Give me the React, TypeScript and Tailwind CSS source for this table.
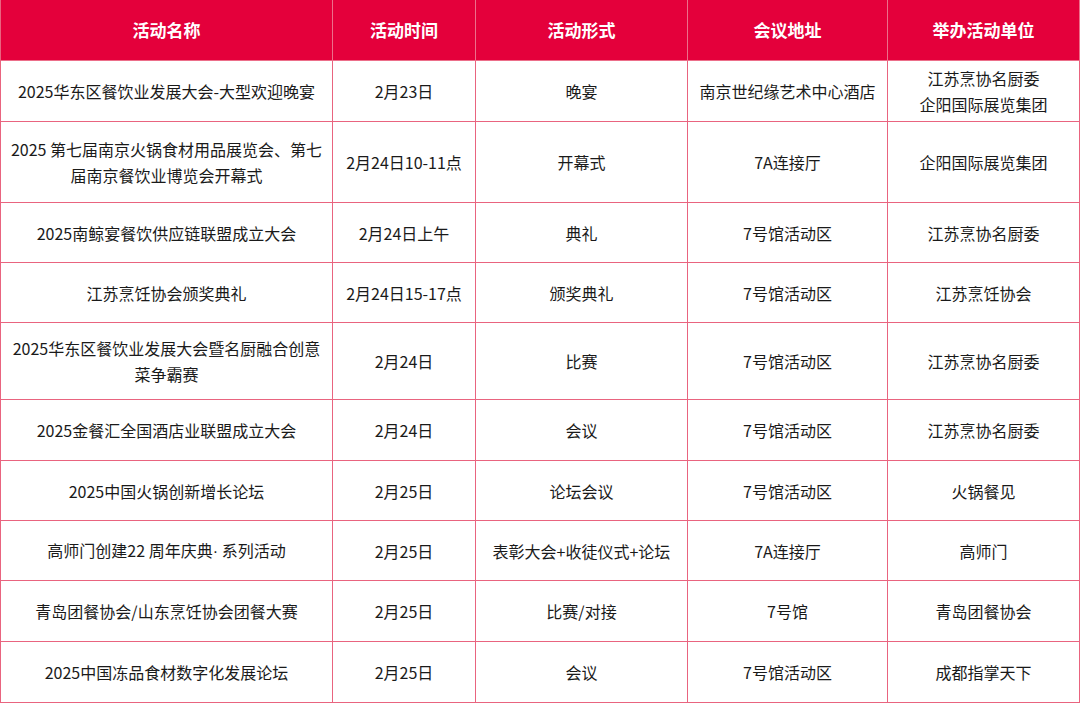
import React from "react";

type Row = { h: string; cells: React.ReactNode[] };

const rows: Row[] = [
  {
    h: "h-[61px]",
    cells: [
      "2025华东区餐饮业发展大会-大型欢迎晚宴",
      "2月23日",
      "晚宴",
      "南京世纪缘艺术中心酒店",
      <>
        江苏烹协名厨委
        <br />
        企阳国际展览集团
      </>,
    ],
  },
  {
    h: "h-[81px]",
    cells: [
      <>
        2025 第七届南京火锅食材用品展览会、第七
        <br />
        届南京餐饮业博览会开幕式
      </>,
      "2月24日10-11点",
      "开幕式",
      "7A连接厅",
      "企阳国际展览集团",
    ],
  },
  {
    h: "h-[60px]",
    cells: ["2025南鲸宴餐饮供应链联盟成立大会", "2月24日上午", "典礼", "7号馆活动区", "江苏烹协名厨委"],
  },
  {
    h: "h-[60px]",
    cells: ["江苏烹饪协会颁奖典礼", "2月24日15-17点", "颁奖典礼", "7号馆活动区", "江苏烹饪协会"],
  },
  {
    h: "h-[77px]",
    cells: [
      <>
        2025华东区餐饮业发展大会暨名厨融合创意
        <br />
        菜争霸赛
      </>,
      "2月24日",
      "比赛",
      "7号馆活动区",
      "江苏烹协名厨委",
    ],
  },
  {
    h: "h-[61px]",
    cells: ["2025金餐汇全国酒店业联盟成立大会", "2月24日", "会议", "7号馆活动区", "江苏烹协名厨委"],
  },
  {
    h: "h-[60px]",
    cells: ["2025中国火锅创新增长论坛", "2月25日", "论坛会议", "7号馆活动区", "火锅餐见"],
  },
  {
    h: "h-[60px]",
    cells: [
      <>
        高师门创建22 周年庆典<span className="font-['Liberation_Sans']">·</span> 系列活动
      </>,
      "2月25日",
      "表彰大会+收徒仪式+论坛",
      "7A连接厅",
      "高师门",
    ],
  },
  {
    h: "h-[61px]",
    cells: ["青岛团餐协会/山东烹饪协会团餐大赛", "2月25日", "比赛/对接", "7号馆", "青岛团餐协会"],
  },
  {
    h: "h-[61px]",
    cells: ["2025中国冻品食材数字化发展论坛", "2月25日", "会议", "7号馆活动区", "成都指掌天下"],
  },
];

const headers = ["活动名称", "活动时间", "活动形式", "会议地址", "举办活动单位"];

export default function App() {
  return (
    <div
      className="w-[1080px] h-[703px] bg-white overflow-hidden"
      style={{ fontFamily: '"Noto Sans CJK SC", "Noto Sans", sans-serif' }}
    >
      <div className="grid grid-cols-[332px_143px_212px_200px_192px] border-l border-[#e9647f]">
        {headers.map((t, i) => (
          <div
            key={"h" + i}
            className="h-[61px] bg-[#e4003b] border-r border-b border-[#ec6f8a] flex items-center justify-center text-white text-[17px] font-bold"
          >
            {t}
          </div>
        ))}
        {rows.map((r, ri) =>
          r.cells.map((c, ci) => (
            <div
              key={ri + "-" + ci}
              className={`${r.h} border-r border-b border-[#e9647f] flex items-center justify-center text-center text-[16px] leading-[26px] text-[#1a1a1a]`}
            >
              <div>{c}</div>
            </div>
          ))
        )}
      </div>
    </div>
  );
}
